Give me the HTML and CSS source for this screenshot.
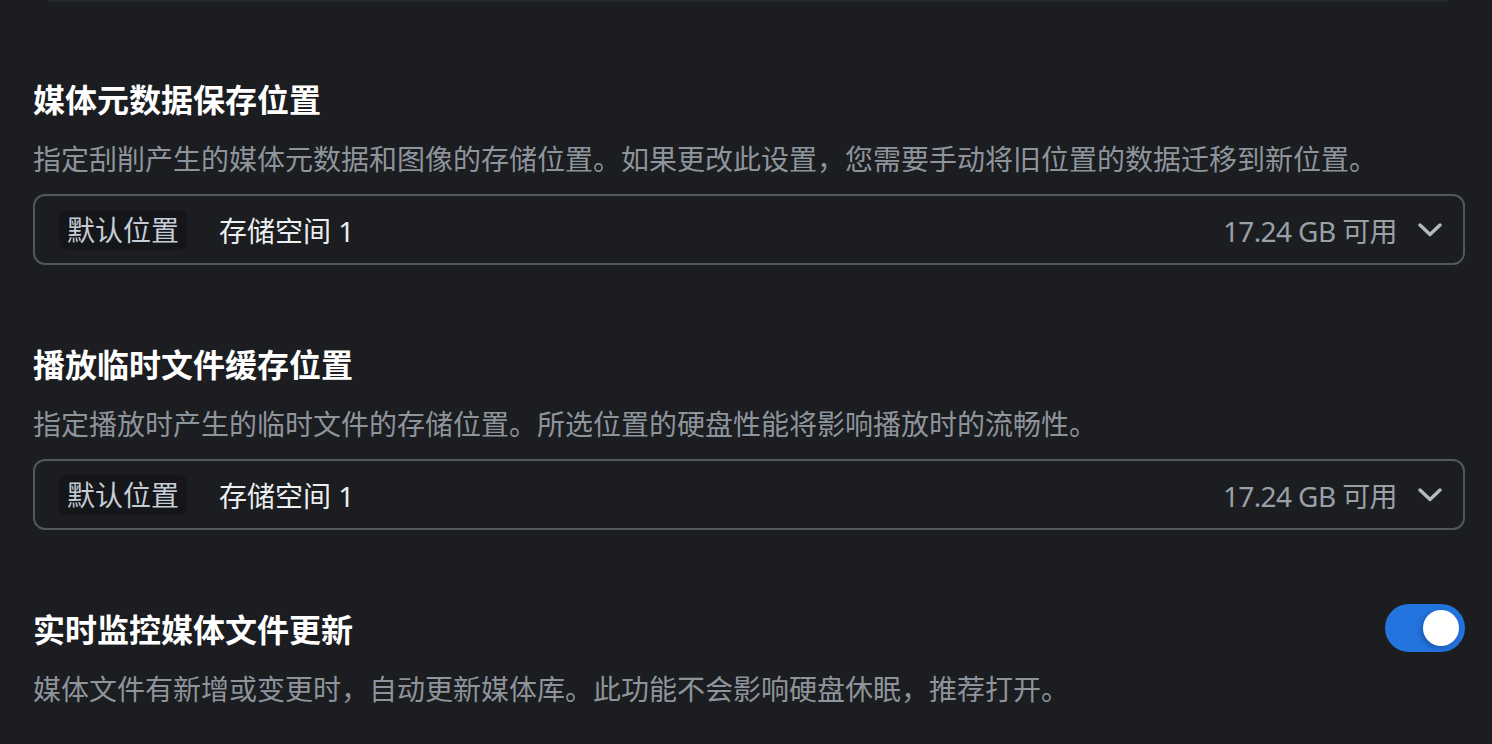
FILE: index.html
```html
<!DOCTYPE html>
<html lang="zh-CN">
<head>
<meta charset="utf-8">
<title>媒体库设置</title>
<link rel="stylesheet" href="styles.css">
</head>
<body>
<div class="page">
  <div class="prev-card"></div>

  <section class="setting">
    <h2 class="title">媒体元数据保存位置</h2>
    <p class="desc">指定刮削产生的媒体元数据和图像的存储位置。如果更改此设置，您需要手动将旧位置的数据迁移到新位置。</p>
    <div class="select">
      <span class="badge">默认位置</span>
      <span class="value">存储空间 1</span>
      <span class="free">17.24 GB 可用</span>
      <svg class="chev" viewBox="0 0 24 14" width="24" height="14"><path d="M2 2 L12 11.5 L22 2" fill="none" stroke="currentColor" stroke-width="3.4" stroke-linecap="round" stroke-linejoin="round"/></svg>
    </div>
  </section>

  <section class="setting">
    <h2 class="title">播放临时文件缓存位置</h2>
    <p class="desc">指定播放时产生的临时文件的存储位置。所选位置的硬盘性能将影响播放时的流畅性。</p>
    <div class="select">
      <span class="badge">默认位置</span>
      <span class="value">存储空间 1</span>
      <span class="free">17.24 GB 可用</span>
      <svg class="chev" viewBox="0 0 24 14" width="24" height="14"><path d="M2 2 L12 11.5 L22 2" fill="none" stroke="currentColor" stroke-width="3.4" stroke-linecap="round" stroke-linejoin="round"/></svg>
    </div>
  </section>

  <section class="setting">
    <div class="title-row">
      <h2 class="title">实时监控媒体文件更新</h2>
      <span class="toggle on"><span class="knob"></span></span>
    </div>
    <p class="desc">媒体文件有新增或变更时，自动更新媒体库。此功能不会影响硬盘休眠，推荐打开。</p>
  </section>
</div>
</body>
</html>
```
FILE: styles.css
```css
html, body {
  margin: 0;
  padding: 0;
  background: #1b1d21;
}
body {
  font-family: "Noto Sans", "Noto Sans CJK SC", sans-serif;
  color: #ffffff;
}
.page {
  padding: 0 27px 0 33px;
  display: flex;
  flex-direction: column;
  gap: 76px;
}
.prev-card {
  height: 2px;
  margin: 0 17px 0 15px;
  background: #25282d;
  border-radius: 0 0 12px 12px;
  margin-bottom: -2px;
}
.setting {
  display: flex;
  flex-direction: column;
}
.title {
  margin: 0;
  font-size: 32px;
  line-height: 48px;
  font-weight: 700;
  color: #ffffff;
}
.title-row {
  display: flex;
  align-items: center;
  justify-content: space-between;
}
.desc {
  margin: 14px 0 0;
  font-size: 28px;
  line-height: 42px;
  color: #8e949b;
}
.select {
  margin-top: 14px;
  height: 71px;
  box-sizing: border-box;
  border: 2px solid #52575e;
  border-radius: 12px;
  display: flex;
  align-items: center;
  padding: 0 21px 0 24px;
  font-size: 28px;
}
.badge {
  background: #141619;
  color: #c6ccd5;
  border-radius: 8px;
  height: 40px;
  line-height: 40px;
  padding: 0 8px;
}
.value {
  margin-left: 32px;
  color: #eceef0;
  flex: 1;
}
.free {
  color: #9aa0a7;
  letter-spacing: -0.6px;
}
.chev {
  margin-left: 21px;
  color: #b5bac0;
}
.toggle {
  width: 80px;
  height: 48px;
  border-radius: 24px;
  background: #2374df;
  display: flex;
  align-items: center;
  justify-content: flex-end;
  padding: 0 6px;
  box-sizing: border-box;
  margin-top: -4px;
}
.knob {
  width: 36px;
  height: 36px;
  border-radius: 50%;
  background: #ffffff;
  box-shadow: -2px 2px 6px rgba(0, 0, 0, 0.25);
}
```
